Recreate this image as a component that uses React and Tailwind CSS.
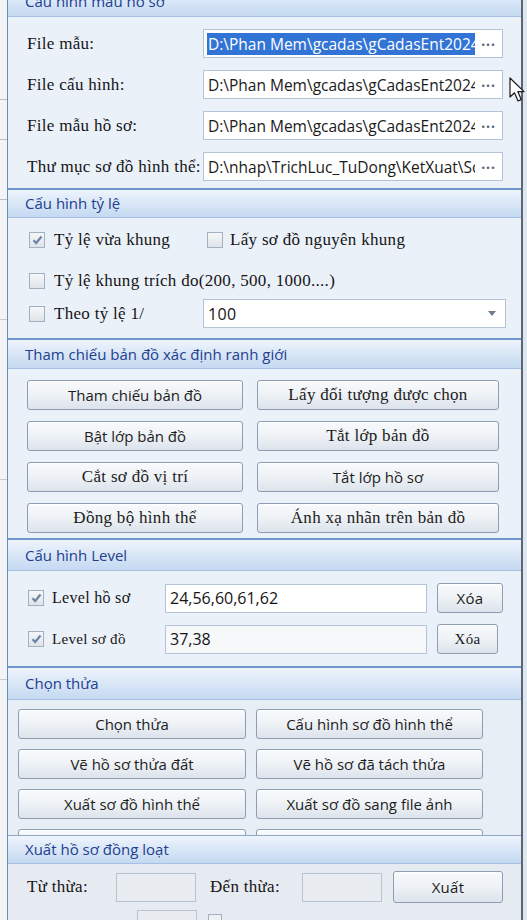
import React from "react";

const sans = "font-['Open_Sans',sans-serif]";
const serif = "font-['Liberation_Serif',serif] tracking-[0.3px]";

function Separator() {
  return <div className="h-[2px] shrink-0 bg-[#6f96cc]" />;
}

function Header({ children, className = "" }) {
  return (
    <div
      className={`shrink-0 flex items-center pl-[17px] bg-linear-to-b from-[#eef4fc] to-[#c4d9f1] border-b border-[#a6c1e4] text-[15px] text-[#22408f] ${sans} ${className}`}
    >
      {children}
    </div>
  );
}

function Check({ checked, className = "" }) {
  return (
    <span
      className={`w-[16px] h-[16px] shrink-0 border border-[#a3b0c0] bg-linear-to-b from-[#f6f7f9] to-[#dfe4ea] flex items-center justify-center ${className}`}
    >
      {checked && (
        <svg width="11" height="10" viewBox="0 0 11 10">
          <path d="M1.5 5.2 L4.2 8 L9.5 1.5" fill="none" stroke="#6e84a6" strokeWidth="2.2" />
        </svg>
      )}
    </span>
  );
}

function Btn({ children, font = sans, className = "" }) {
  return (
    <button
      className={`h-[30px] shrink-0 rounded-[3px] border border-[#8e9db1] bg-linear-to-b from-[#f8fafc] via-[#eef2f6] to-[#dce3eb] text-[#1c1c1c] text-[15px] shadow-[inset_0_1px_0_#ffffff] ${font} ${className}`}
    >
      {children}
    </button>
  );
}

function PathField({ value, selected }) {
  return (
    <div className="h-[29px] w-[300px] border border-[#b4c3d7] bg-white flex items-center pl-[3px] pr-[6px]">
      <div className={`w-[268px] overflow-hidden whitespace-nowrap text-[15.5px] leading-[22px] ${sans}`}>
        <span className={selected ? "bg-[#3274d6] text-white px-[1px]" : "text-[#1a1a1a] px-[1px]"}>{value}</span>
      </div>
      <span className="ml-auto text-[#5a6478] text-[14px] tracking-[1px] font-bold leading-none pb-[6px]">...</span>
    </div>
  );
}

export default function App() {
  const paths = [
    { label: "File mẫu:", value: "D:\\Phan Mem\\gcadas\\gCadasEnt2024", selected: true },
    { label: "File cấu hình:", value: "D:\\Phan Mem\\gcadas\\gCadasEnt2024" },
    { label: "File mẫu hồ sơ:", value: "D:\\Phan Mem\\gcadas\\gCadasEnt2024" },
    { label: "Thư mục sơ đồ hình thể:", value: "D:\\nhap\\TrichLuc_TuDong\\KetXuat\\Sơ đồ" },
  ];

  const mapButtons = [
    ["Tham chiếu bản đồ", sans, "Lấy đối tượng được chọn", serif],
    ["Bật lớp bản đồ", sans, "Tắt lớp bản đồ", serif],
    ["Cắt sơ đồ vị trí", serif, "Tắt lớp hồ sơ", sans],
    ["Đồng bộ hình thể", serif, "Ánh xạ nhãn trên bản đồ", serif],
  ];

  const parcelButtons = [
    ["Chọn thửa", "Cấu hình sơ đồ hình thể"],
    ["Vẽ hồ sơ thửa đất", "Vẽ hồ sơ đã tách thửa"],
    ["Xuất sơ đồ hình thể", "Xuất sơ đồ sang file ảnh"],
    ["", ""],
  ];

  return (
    <div className="relative w-[527px] h-[920px] overflow-hidden flex items-start bg-[#dfe6ee]">
      {/* background app strip */}
      <div className="w-[7px] h-[920px] shrink-0 bg-[#f3f4f6] flex flex-col">
        <div className="h-[100px] border-b border-[#b9bec6]" />
        <div className="h-[40px] border-b border-[#b9bec6]" />
        <div className="h-[60px] border-b border-[#b9bec6]" />
        <div className="h-[120px] border-b border-[#c6cbd2]" />
        <div className="h-[160px] border-b border-[#c6cbd2]" />
        <div className="h-[200px] border-b border-[#c6cbd2]" />
      </div>

      {/* dialog */}
      <div className="w-[516px] h-[920px] shrink-0 overflow-hidden border-l border-r-[2px] border-l-[#6d8cb6] border-r-[#5b6675] bg-[#ebf1f9] flex flex-col">
        {/* Cấu hình mẫu hồ sơ */}
        <Header className="h-[30px] -mt-[13px]">Cấu hình mẫu hồ sơ</Header>
        <div className="h-[171px] shrink-0 flex flex-col gap-[12px] pt-[12px] pl-[19px]">
          {paths.map((p) => (
            <div key={p.label} className="flex items-center">
              <span className={`w-[176px] text-[17px] text-[#151515] ${serif}`}>{p.label}</span>
              <PathField value={p.value} selected={p.selected} />
            </div>
          ))}
        </div>
        <Separator />

        {/* Cấu hình tỷ lệ */}
        <Header className="h-[28px]">Cấu hình tỷ lệ</Header>
        <div className={`h-[120px] shrink-0 flex flex-col pt-[14px] pl-[21px] text-[17px] text-[#151515] ${serif}`}>
          <div className="flex items-center h-[16px]">
            <Check checked />
            <span className="ml-[9px] w-[153px]">Tỷ lệ vừa khung</span>
            <Check />
            <span className="ml-[7px]">Lấy sơ đồ nguyên khung</span>
          </div>
          <div className="flex items-center h-[17px] mt-[24px]">
            <Check />
            <span className="ml-[9px]">Tỷ lệ khung trích đo(200, 500, 1000....)</span>
          </div>
          <div className="flex items-center h-[29px] mt-[10px]">
            <Check />
            <span className="ml-[9px] w-[149px]">Theo tỷ lệ 1/</span>
            <div className={`h-[29px] w-[303px] border border-[#b4c3d7] bg-white flex items-center pl-[4px] pr-[9px] text-[16px] ${sans}`}>
              <span>100</span>
              <svg className="ml-auto" width="8" height="5" viewBox="0 0 8 5">
                <path d="M0 0 H8 L4 5 Z" fill="#6f7c8c" />
              </svg>
            </div>
          </div>
        </div>
        <Separator />

        {/* Tham chiếu bản đồ */}
        <Header className="h-[29px]">Tham chiếu bản đồ xác định ranh giới</Header>
        <div className="h-[169px] shrink-0 flex flex-col gap-[11px] pt-[11px] pl-[19px]">
          {mapButtons.map(([a, fa, b, fb]) => (
            <div key={a} className="flex gap-[14px]">
              <Btn font={fa} className={`w-[216px] ${fa === serif ? "text-[17px]" : ""}`}>{a}</Btn>
              <Btn font={fb} className={`w-[242px] ${fb === serif ? "text-[17px]" : ""}`}>{b}</Btn>
            </div>
          ))}
        </div>
        <Separator />

        {/* Cấu hình Level */}
        <Header className="h-[31px]">Cấu hình Level</Header>
        <div className={`h-[95px] shrink-0 flex flex-col gap-[11px] pt-[12px] pl-[20px] text-[#151515] ${serif}`}>
          <div className="flex items-center h-[30px]">
            <Check checked />
            <span className="ml-[8px] w-[113px] text-[16px]">Level hồ sơ</span>
            <div className={`h-[29px] w-[262px] border border-[#b4c3d7] bg-white flex items-center pl-[4px] text-[16px] tracking-normal ${sans}`}>24,56,60,61,62</div>
            <Btn className="ml-[10px] w-[66px]">Xóa</Btn>
          </div>
          <div className="flex items-center h-[30px]">
            <Check checked />
            <span className="ml-[8px] w-[113px] text-[15px]">Level sơ đồ</span>
            <div className={`h-[29px] w-[262px] border border-[#b4c3d7] bg-[#f7f8fa] flex items-center pl-[4px] text-[16px] tracking-normal ${sans}`}>37,38</div>
            <Btn font={serif} className="ml-[10px] w-[61px] text-[15px]">Xóa</Btn>
          </div>
        </div>
        <Separator />

        {/* Chọn thửa */}
        <Header className="h-[32px]">Chọn thửa</Header>
        <div className="h-[135px] shrink-0 overflow-hidden flex flex-col gap-[10px] pt-[9px] pl-[10px] bg-[#e8eef5]">
          {parcelButtons.map(([a, b], i) => (
            <div key={i} className="flex gap-[10px] shrink-0">
              <Btn className="w-[228px]">{a}</Btn>
              <Btn className="w-[227px]">{b}</Btn>
            </div>
          ))}
        </div>

        {/* Xuất hồ sơ đồng loạt */}
        <Header className="h-[29px] border-t border-t-[#8ea7c6]">Xuất hồ sơ đồng loạt</Header>
        <div className={`h-[90px] shrink-0 flex flex-col pt-[7px] pl-[19px] bg-[#e6ebf1] text-[17px] text-[#151515] ${serif}`}>
          <div className="flex items-center h-[32px]">
            <span className="w-[89px]">Từ thừa:</span>
            <div className="h-[29px] w-[80px] border border-[#b9c4d1] bg-[#e9ecf0]" />
            <span className="ml-[14px] w-[92px]">Đến thừa:</span>
            <div className="h-[29px] w-[80px] border border-[#b9c4d1] bg-[#e9ecf0]" />
            <Btn className="ml-[11px] w-[110px] h-[32px]">Xuất</Btn>
          </div>
          <div className="flex items-start h-[20px] mt-[7px]">
            <span className="w-[110px]" />
            <div className="h-[29px] w-[60px] border border-[#b9c4d1] bg-[#e9ecf0]" />
            <span className="ml-[11px] mt-[4px] w-[14px] h-[14px] border border-[#a3b0c0] bg-[#eef1f4]" />
          </div>
        </div>
      </div>

      {/* mouse pointer */}
      <svg className="absolute left-[509px] top-[77px]" width="19" height="27" viewBox="0 0 19 27">
        <path
          d="M1 1 L1 20 L5.5 15.8 L9 24 L12.2 22.6 L8.8 14.6 L15 14.6 Z"
          fill="#ffffff"
          stroke="#1a1a1a"
          strokeWidth="1.2"
          strokeLinejoin="round"
        />
      </svg>
    </div>
  );
}
